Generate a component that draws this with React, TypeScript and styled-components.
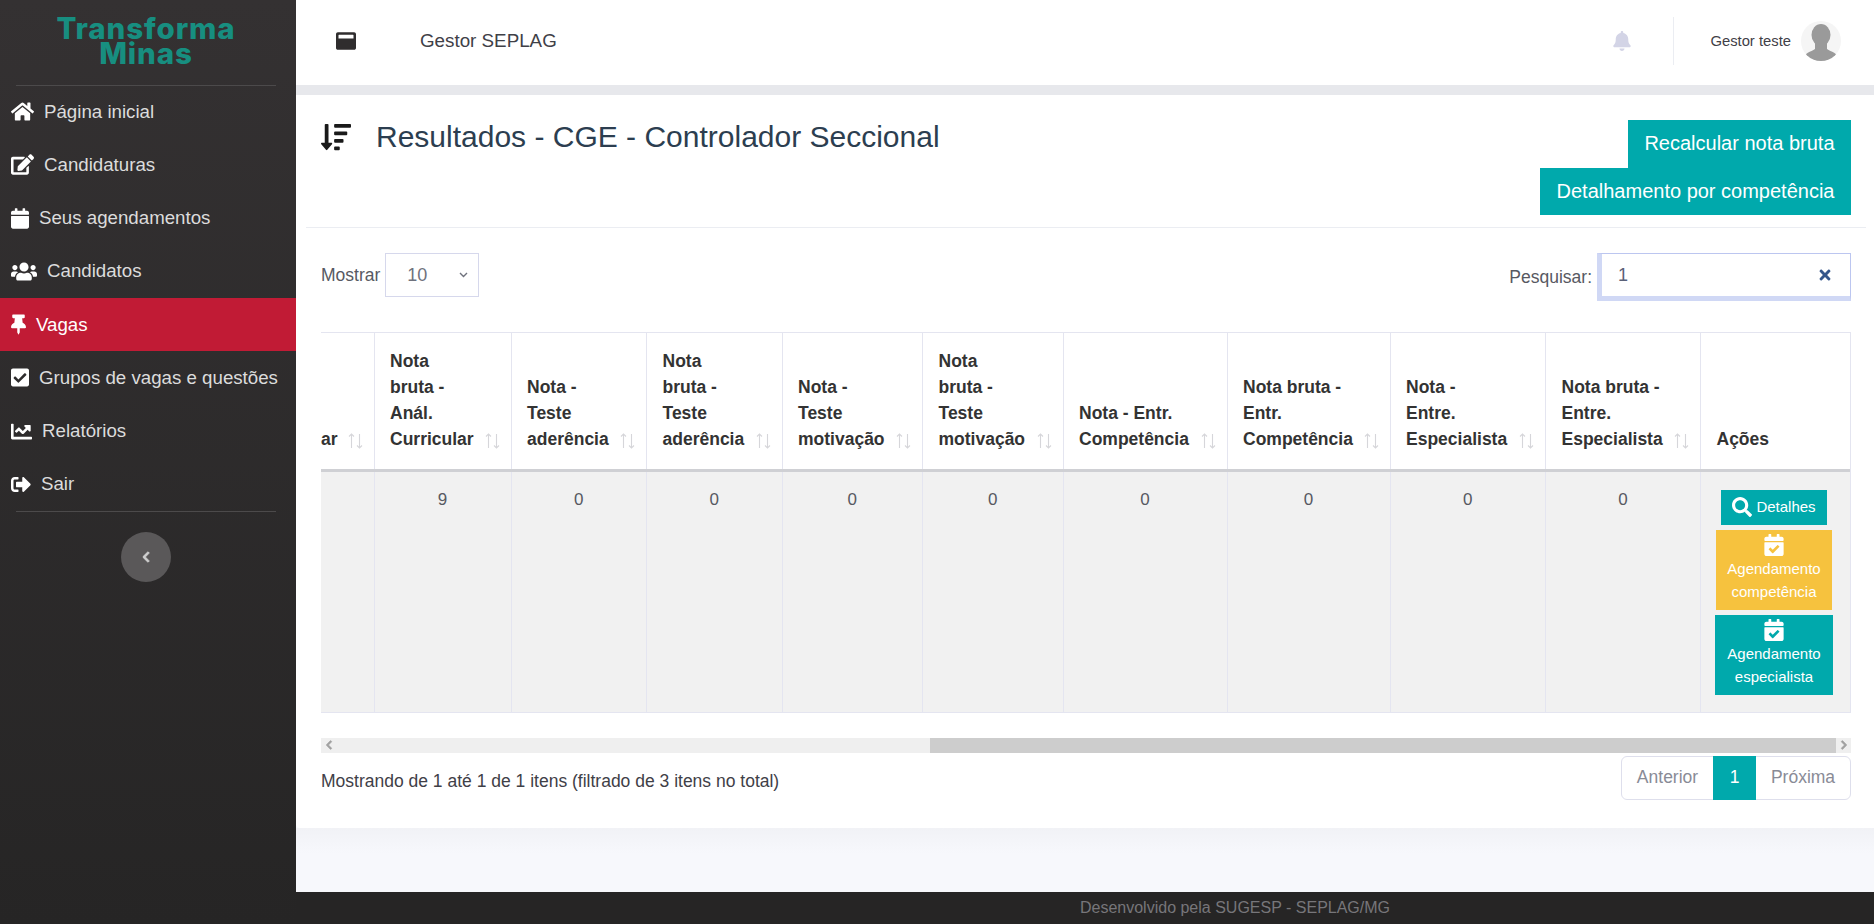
import React from 'react';
import styled, { createGlobalStyle } from 'styled-components';
import {
  FaHome,
  FaEdit,
  FaCalendar,
  FaUsers,
  FaThumbtack,
  FaCheckSquare,
  FaChartLine,
  FaSignOutAlt,
  FaChevronLeft,
  FaChevronRight,
  FaWindowMaximize,
  FaBell,
  FaSortAmountDown,
  FaTimes,
  FaSearch,
  FaCalendarCheck,
} from 'react-icons/fa';

const GlobalStyle = createGlobalStyle`
  html, body {
    margin: 0;
    padding: 0;
    background: #f7f8fc;
    overflow: hidden;
  }
  * { box-sizing: border-box; }
`;

const Page = styled.div`
  display: flex;
  width: 1874px;
  height: 924px;
  font-family: "Liberation Sans", Arial, sans-serif;
`;

const Sidebar = styled.aside`
  width: 296px;
  flex-shrink: 0;
  display: flex;
  flex-direction: column;
  align-items: center;
  background: linear-gradient(180deg, #343132 0%, #262525 100%);
`;

const Logo = styled.div`
  width: 260px;
  height: 86px;
  margin: 0 4px -1px 0;
  padding-top: 16px;
  border-bottom: 1px solid #4c4a4b;
  text-align: center;
  color: #178e80;
  font-family: Inter, sans-serif;
  font-weight: 800;
  font-size: 29.5px;
  line-height: 25px;
  letter-spacing: 0.9px;
`;

const Menu = styled.nav`
  width: 100%;
`;

const MenuItem = styled.div<{ $active?: boolean; $iconWidth: number }>`
  height: 53.25px;
  display: flex;
  align-items: center;
  gap: 10px;
  padding-left: 11px;
  font-size: 18.7px;
  color: ${(p) => (p.$active ? '#ffffff' : '#dcdcdc')};
  background: ${(p) => (p.$active ? '#c11b35' : 'transparent')};

  svg {
    width: ${(p) => p.$iconWidth}px;
    height: 21px;
    color: #ffffff;
    flex-shrink: 0;
  }
`;

const SideRule = styled.div`
  width: 260px;
  height: 1px;
  margin-right: 4px;
  background: #4c4a4b;
`;

const CollapseButton = styled.div`
  width: 50px;
  height: 50px;
  margin: 20px 4px 0 0;
  border-radius: 50%;
  background: #5a5859;
  color: #cfcfcf;
  display: flex;
  align-items: center;
  justify-content: center;
  font-size: 12px;

  svg {
    stroke-width: 40;
  }
`;

const Main = styled.div`
  flex: 1;
  min-width: 0;
  display: flex;
  flex-direction: column;
`;

const Header = styled.header`
  height: 85px;
  flex-shrink: 0;
  background: #ffffff;
  display: flex;
  align-items: center;
  padding: 0 33px 4px 40px;
`;

const HeaderIcon = styled.span`
  width: 84px;
  font-size: 20px;
  color: #2f2d2e;
  display: flex;
`;

const HeaderTitle = styled.span`
  flex: 1;
  font-size: 18.8px;
  color: #3f4047;
`;

const Bell = styled.span`
  display: flex;
  font-size: 20px;
  color: #d3d4e6;
  margin-right: 41px;
`;

const HeaderRule = styled.span`
  width: 1px;
  height: 48px;
  background: #ebedf2;
  margin-right: 36px;
`;

const UserName = styled.span`
  font-size: 14.8px;
  color: #3f4047;
  margin-right: 10px;
`;

const Avatar = styled.svg`
  width: 40px;
  height: 40px;
  display: block;
`;

const Band = styled.div`
  height: 10px;
  flex-shrink: 0;
  background: #e7e8ec;
`;

const Card = styled.section`
  height: 733px;
  flex-shrink: 0;
  background: #ffffff;
  border-radius: 0 0 0 4px;
`;

const CardHead = styled.div`
  height: 133px;
  margin: 0 8px 0 10px;
  padding: 25px 15px 0;
  border-bottom: 1px solid #ebedf2;
  display: flex;
  justify-content: space-between;
`;

const TitleWrap = styled.div`
  display: flex;
  align-items: flex-start;
  gap: 25px;

  svg {
    font-size: 30px;
    color: #1a1a1a;
    margin-top: 2px;
  }
`;

const Title = styled.h3`
  margin: 0;
  font-weight: 400;
  font-size: 30px;
  line-height: 34px;
  color: #2c3e50;
`;

const HeadActions = styled.div`
  display: flex;
  flex-direction: column;
  align-items: flex-end;
`;

const HeadButton = styled.div`
  height: 47.5px;
  padding: 0 16.5px;
  display: flex;
  align-items: center;
  background: #00a9ac;
  color: #ffffff;
  font-size: 20px;
`;

const CardBody = styled.div`
  margin: 0 23px 0 25px;
`;

const Toolbar = styled.div`
  display: flex;
  justify-content: space-between;
  align-items: flex-start;
  padding-top: 25px;
  height: 104px;
`;

const ToolGroup = styled.label`
  display: flex;
  align-items: center;
  font-size: 17.5px;
  color: #575962;
`;

const SelectBox = styled.div`
  width: 94px;
  height: 44px;
  margin-left: 5px;
  padding: 0 10px 0 21px;
  border: 1px solid #d6d8ec;
  display: flex;
  align-items: center;
  justify-content: space-between;
  color: #6f727d;
  font-size: 18px;
`;

const SearchBox = styled.div`
  width: 254px;
  height: 48px;
  margin-left: 5px;
  padding: 0 17px 0 16px;
  background: #ffffff;
  border: 1px solid #bcc6f0;
  border-bottom-width: 5px;
  border-left-width: 5px;
  border-bottom-color: #d0d8f5;
  border-left-color: #d0d8f5;
  display: flex;
  align-items: center;
  justify-content: space-between;
  color: #5a6178;
  font-size: 18px;

  svg {
    color: #34568b;
    font-size: 16px;
  }
`;

const TableFrame = styled.div`
  width: 1530px;
  overflow: hidden;
  border: 1px solid #e4e5f0;
  border-left: none;
`;

const Table = styled.table`
  width: 1529px;
  table-layout: fixed;
  border-collapse: collapse;
`;

const Th = styled.th`
  position: relative;
  height: 137px;
  padding: 0 15.5px 17px;
  vertical-align: bottom;
  text-align: left;
  font-size: 17.5px;
  line-height: 26px;
  font-weight: 700;
  color: #333333;
  border-left: 1px solid #e4e5f0;
  border-bottom: 3px solid #cfd0d4;

  &:first-child {
    border-left: none;
    padding-left: 0;
  }
`;

const SortMark = styled.svg`
  position: absolute;
  right: 11px;
  bottom: 20px;
  width: 15px;
  height: 16px;
  fill: none;
  stroke: #d6d6da;
  stroke-width: 1.1;
`;

const Td = styled.td`
  padding: 18px 0 17px;
  vertical-align: top;
  text-align: center;
  font-size: 17px;
  line-height: 20px;
  color: #575962;
  background: #f1f1f1;
  border-left: 1px solid #e4e5f0;

  &:first-child {
    border-left: none;
  }
`;

const ActionStack = styled.div`
  display: flex;
  flex-direction: column;
  align-items: center;
  gap: 5px;
  padding-right: 3px;
`;

const DetailButton = styled.div`
  width: 106px;
  height: 35px;
  display: flex;
  align-items: center;
  justify-content: center;
  gap: 4px;
  background: #00a9ac;
  color: #ffffff;
  font-size: 15px;

  svg {
    font-size: 20px;
  }
`;

const ScheduleButton = styled.div<{ $tone: 'yellow' | 'teal'; $width: number }>`
  width: ${(p) => p.$width}px;
  height: 80px;
  padding-top: 4px;
  display: flex;
  flex-direction: column;
  align-items: center;
  background: ${(p) => (p.$tone === 'yellow' ? '#f6c23e' : '#00a9ac')};
  color: #ffffff;
  font-size: 15px;
  line-height: 23px;

  svg {
    font-size: 22px;
    margin-bottom: 1px;
    flex-shrink: 0;
  }
`;

const ScrollTrack = styled.div`
  height: 15px;
  margin-top: 25px;
  display: flex;
  align-items: stretch;
  background: #efefef;
`;

const ScrollArrow = styled.div`
  width: 15px;
  display: flex;
  align-items: center;
  justify-content: center;
  font-size: 10px;
  color: #a0a0a0;

  svg {
    stroke-width: 40;
  }
`;

const ScrollGap = styled.div`
  flex: 1;
`;

const ScrollThumb = styled.div`
  width: 906px;
  background: #cdcdcd;
`;

const Foot = styled.div`
  display: flex;
  justify-content: space-between;
  align-items: flex-start;
  margin-top: 3px;
`;

const Info = styled.div`
  padding-top: 15px;
  font-size: 17.5px;
  color: #3f4047;
`;

const Pager = styled.div`
  height: 44px;
  display: flex;
  align-items: stretch;
  border: 1px solid #dedfec;
  border-radius: 6px;
  font-size: 17.5px;
  color: #898b96;
  background: #ffffff;
`;

const PagerItem = styled.div<{ $current?: boolean; $width: number }>`
  width: ${(p) => p.$width}px;
  display: flex;
  align-items: center;
  justify-content: center;
  margin: ${(p) => (p.$current ? '-1px 0' : '0')};
  background: ${(p) => (p.$current ? '#00a9ac' : 'transparent')};
  color: ${(p) => (p.$current ? '#ffffff' : 'inherit')};
`;

const Spacer = styled.div`
  flex: 1;
  background: linear-gradient(180deg, #f1f2f6 0%, #f7f8fc 40%);
`;

const Footer = styled.footer`
  height: 32px;
  flex-shrink: 0;
  padding-left: 300px;
  background: #262525;
  color: #77767a;
  font-size: 16px;
  line-height: 32px;
  text-align: center;
`;

const menuItems = [
  { label: 'Página inicial', icon: <FaHome />, iconWidth: 23 },
  { label: 'Candidaturas', icon: <FaEdit />, iconWidth: 23 },
  { label: 'Seus agendamentos', icon: <FaCalendar />, iconWidth: 18 },
  { label: 'Candidatos', icon: <FaUsers />, iconWidth: 26 },
  { label: 'Vagas', icon: <FaThumbtack />, iconWidth: 15, active: true },
  { label: 'Grupos de vagas e questões', icon: <FaCheckSquare />, iconWidth: 18 },
  { label: 'Relatórios', icon: <FaChartLine />, iconWidth: 21 },
  { label: 'Sair', icon: <FaSignOutAlt />, iconWidth: 20 },
];

// a primeira coluna está cortada pelo scroll horizontal, por isso só "ar"
const columns = [
  { width: 53, lines: ['ar'] },
  { width: 137, lines: ['Nota', 'bruta -', 'Anál.', 'Curricular'], value: '9' },
  { width: 135.5, lines: ['Nota -', 'Teste', 'aderência'], value: '0' },
  { width: 135.5, lines: ['Nota', 'bruta -', 'Teste', 'aderência'], value: '0' },
  { width: 140.5, lines: ['Nota -', 'Teste', 'motivação'], value: '0' },
  { width: 140.5, lines: ['Nota', 'bruta -', 'Teste', 'motivação'], value: '0' },
  { width: 164, lines: ['Nota - Entr.', 'Competência'], value: '0' },
  { width: 163, lines: ['Nota bruta -', 'Entr.', 'Competência'], value: '0' },
  { width: 155.5, lines: ['Nota -', 'Entre.', 'Especialista'], value: '0' },
  { width: 155, lines: ['Nota bruta -', 'Entre.', 'Especialista'], value: '0' },
];

const App: React.FC = () => {
  return (
    <Page>
      <GlobalStyle />
      <Sidebar>
        <Logo>
          Transforma
          <br />
          Minas
        </Logo>
        <Menu>
          {menuItems.map((item) => (
            <MenuItem key={item.label} $active={item.active} $iconWidth={item.iconWidth}>
              {item.icon}
              <span>{item.label}</span>
            </MenuItem>
          ))}
        </Menu>
        <SideRule />
        <CollapseButton>
          <FaChevronLeft />
        </CollapseButton>
      </Sidebar>

      <Main>
        <Header>
          <HeaderIcon>
            <FaWindowMaximize />
          </HeaderIcon>
          <HeaderTitle>Gestor SEPLAG</HeaderTitle>
          <Bell>
            <FaBell />
          </Bell>
          <HeaderRule />
          <UserName>Gestor teste</UserName>
          <Avatar viewBox="0 0 40 40">
            <defs>
              <clipPath id="avatarClip">
                <circle cx="20" cy="20" r="20" />
              </clipPath>
            </defs>
            <circle cx="20" cy="20" r="20" fill="#f5f5f5" />
            <g clipPath="url(#avatarClip)" fill="#9a9a9a">
              <ellipse cx="20" cy="14" rx="9.5" ry="11" />
              <path d="M14 22 L26 22 L26 28 C30 31 37 31 38 40 L2 40 C3 31 10 31 14 28 Z" />
            </g>
          </Avatar>
        </Header>
        <Band />
        <Card>
          <CardHead>
            <TitleWrap>
              <FaSortAmountDown />
              <Title>Resultados - CGE - Controlador Seccional</Title>
            </TitleWrap>
            <HeadActions>
              <HeadButton>Recalcular nota bruta</HeadButton>
              <HeadButton>Detalhamento por competência</HeadButton>
            </HeadActions>
          </CardHead>
          <CardBody>
            <Toolbar>
              <ToolGroup>
                Mostrar
                <SelectBox>
                  10
                  <svg width="9" height="6" viewBox="0 0 9 6" fill="none" stroke="#6f727d" strokeWidth="1.4">
                    <path d="M1 1 L4.5 4.5 L8 1" />
                  </svg>
                </SelectBox>
              </ToolGroup>
              <ToolGroup>
                Pesquisar:
                <SearchBox>
                  1
                  <FaTimes />
                </SearchBox>
              </ToolGroup>
            </Toolbar>
            <TableFrame>
              <Table>
                <colgroup>
                  {columns.map((col, i) => (
                    <col key={i} style={{ width: col.width }} />
                  ))}
                  <col />
                </colgroup>
                <thead>
                  <tr>
                    {columns.map((col, i) => (
                      <Th key={i}>
                        {col.lines.map((line, j) => (
                          <React.Fragment key={j}>
                            {j > 0 && <br />}
                            {line}
                          </React.Fragment>
                        ))}
                        <SortMark viewBox="0 0 15 16">
                          <path d="M3.5 15 V1 M1 3.5 L3.5 1 L6 3.5" />
                          <path d="M11.5 1 V15 M9 12.5 L11.5 15 L14 12.5" />
                        </SortMark>
                      </Th>
                    ))}
                    <Th>Ações</Th>
                  </tr>
                </thead>
                <tbody>
                  <tr>
                    {columns.map((col, i) => (
                      <Td key={i}>{col.value}</Td>
                    ))}
                    <Td>
                      <ActionStack>
                        <DetailButton>
                          <FaSearch />
                          Detalhes
                        </DetailButton>
                        <ScheduleButton $tone="yellow" $width={116}>
                          <FaCalendarCheck />
                          Agendamento
                          <br />
                          competência
                        </ScheduleButton>
                        <ScheduleButton $tone="teal" $width={118}>
                          <FaCalendarCheck />
                          Agendamento
                          <br />
                          especialista
                        </ScheduleButton>
                      </ActionStack>
                    </Td>
                  </tr>
                </tbody>
              </Table>
            </TableFrame>
            <ScrollTrack>
              <ScrollArrow>
                <FaChevronLeft />
              </ScrollArrow>
              <ScrollGap />
              <ScrollThumb />
              <ScrollArrow>
                <FaChevronRight />
              </ScrollArrow>
            </ScrollTrack>
            <Foot>
              <Info>Mostrando de 1 até 1 de 1 itens (filtrado de 3 itens no total)</Info>
              <Pager>
                <PagerItem $width={91}>Anterior</PagerItem>
                <PagerItem $current $width={43}>1</PagerItem>
                <PagerItem $width={94}>Próxima</PagerItem>
              </Pager>
            </Foot>
          </CardBody>
        </Card>
        <Spacer />
        <Footer>Desenvolvido pela SUGESP - SEPLAG/MG</Footer>
      </Main>
    </Page>
  );
};

export default App;
